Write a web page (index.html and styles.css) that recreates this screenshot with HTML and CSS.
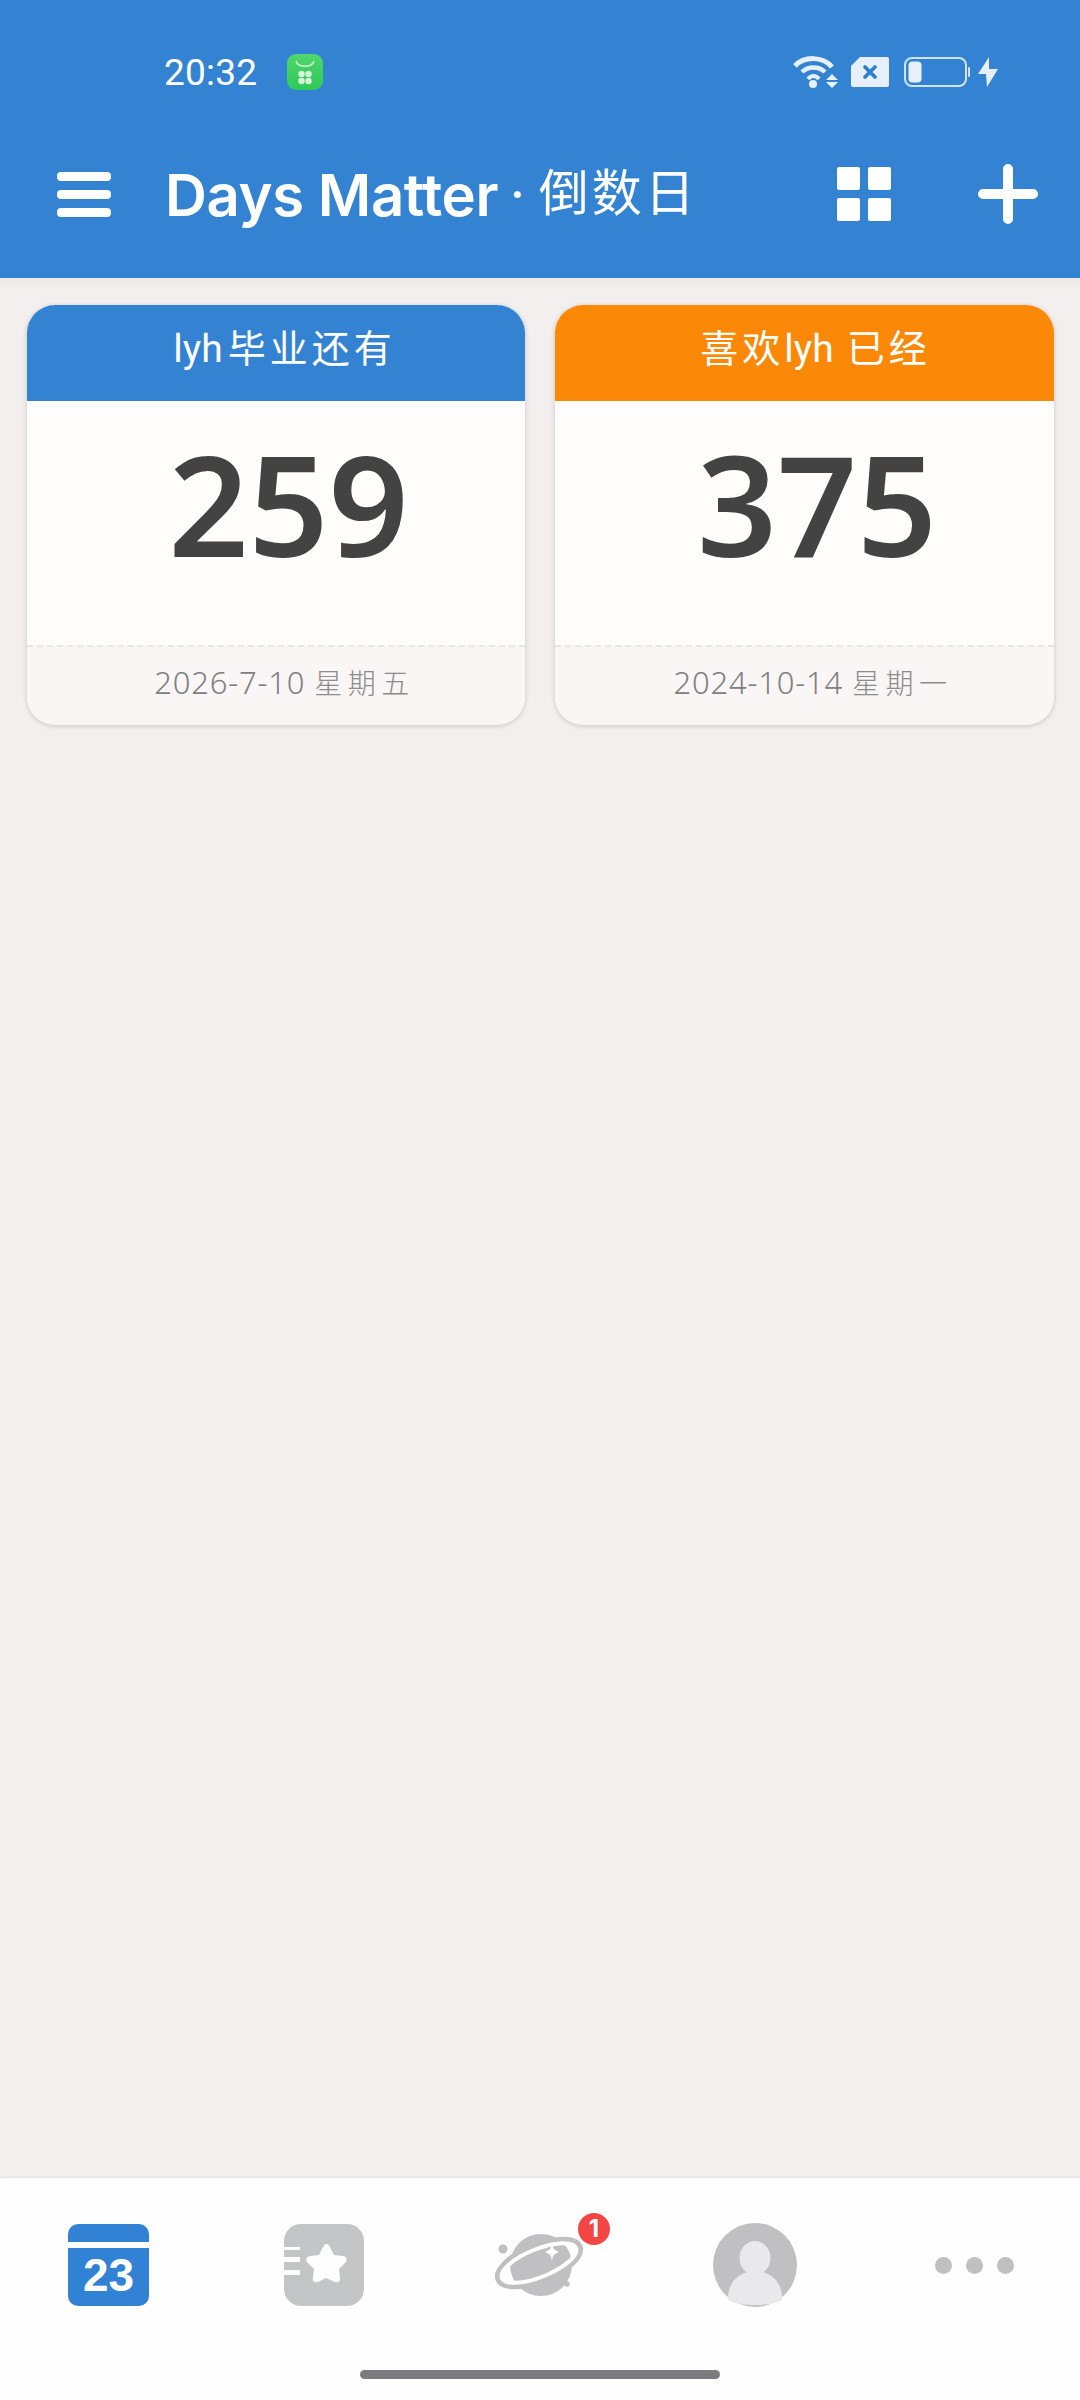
FILE: index.html
```html
<!DOCTYPE html>
<html lang="zh">
<head>
<meta charset="utf-8">
<title>Days Matter</title>
<link rel="stylesheet" href="styles.css">
</head>
<body>
<div class="app">
  <header class="topbar">
    <div class="status">
      <div class="status-left">
        <span class="time">20:32</span>
        <svg class="store" viewBox="0 0 36 36"><defs><linearGradient id="storeFill" x1="0" y1="0" x2="0" y2="1"><stop offset="0" stop-color="#4fd66c"/><stop offset="1" stop-color="#2ec95a"/></linearGradient></defs><rect width="36" height="36" rx="9" fill="url(#storeFill)"/><path d="M9 7c2 7 16 7 18 0" fill="none" stroke="#d8f5dc" stroke-width="1.5"/><g fill="#d8f5dc"><circle cx="14.500" cy="20" r="3.200"/><circle cx="21.500" cy="20" r="3.200"/><circle cx="14.500" cy="27" r="3.200"/><circle cx="21.500" cy="27" r="3.200"/></g></svg>
      </div>
      <div class="status-right">
        <svg class="wifi" viewBox="0 0 46 34"><g fill="none" stroke="#e6f0fa"><path d="M2 11C11 1 30 1 39 12" stroke-width="5"/><path d="M9 17C15 11 26 11 32 17" stroke-width="4.500"/><path d="M15 24C18 20 23 20 26 24" stroke-width="4"/></g><circle cx="20" cy="29" r="4" fill="#e6f0fa"/><path d="M39 19l6 6H33zM33 27h12l-6 6z" fill="#e6f0fa"/></svg>
        <svg class="sim" viewBox="0 0 38 30"><path d="M9 0H36a2 2 0 0 1 2 2V28a2 2 0 0 1-2 2H2a2 2 0 0 1-2-2V9z" fill="#e6f0fa"/><path d="M14 10l10 10M24 10L14 20" stroke="#2f7fd0" stroke-width="3.800" stroke-linecap="round"/></svg>
        <svg class="battery" viewBox="0 0 66 30"><rect x="1" y="1" width="61" height="28" rx="7" fill="none" stroke="#cfe3f6" stroke-width="2"/><rect x="4.500" y="4.500" width="13" height="21" rx="4" fill="#e6f0fa"/><rect x="64" y="10" width="2" height="10" rx="1" fill="#cfe3f6"/></svg>
        <svg class="bolt" viewBox="0 0 20 30"><path d="M11 0L0 17H8L9 30L20 12H11z" fill="#e6f0fa"/></svg>
      </div>
    </div>
    <div class="toolbar">
      <div class="menu"><span class="menu-bar"></span><span class="menu-bar"></span><span class="menu-bar"></span></div>
      <h1 class="title">Days Matter<span class="title-dot">·</span><span class="title-cn">倒数日</span></h1>
      <div class="grid-btn"><span class="cell"></span><span class="cell"></span><span class="cell"></span><span class="cell"></span></div>
      <svg class="plus" viewBox="0 0 60 60"><path d="M30 5V55M5 30H55" stroke="#fff" stroke-width="10" stroke-linecap="round"/></svg>
    </div>
  </header>

  <main class="content">
    <section class="card">
      <div class="card-head blue">lyh<span class="head-cn">毕业还有</span></div>
      <div class="card-num">259</div>
      <div class="card-date">2026-7-10 <span class="cn">星期五</span></div>
    </section>
    <section class="card">
      <div class="card-head orange"><span class="head-cn">喜欢</span>lyh<span class="head-cn head-gap">已经</span></div>
      <div class="card-num">375</div>
      <div class="card-date">2024-10-14 <span class="cn">星期一</span></div>
    </section>
  </main>

  <nav class="tabbar">
    <div class="tabs">
      <div class="tab">
        <svg class="tab-icon" viewBox="0 0 100 100"><path d="M20 9H81a10 10 0 0 1 10 10V27H10V19A10 10 0 0 1 20 9z" fill="#3182d5"/><path d="M10 33H91V81a10 10 0 0 1-10 10H20A10 10 0 0 1 10 81z" fill="#3182d5"/><text class="cal-num" x="50.500" y="76" text-anchor="middle">23</text></svg>
      </div>
      <div class="tab">
        <svg class="tab-icon" viewBox="0 0 100 100"><rect x="10" y="9" width="80" height="82" rx="17" fill="#c3c5c7"/><path d="M9 32H26V35H9zM9 42H26V47H9zM9 55H26V60H9z" fill="#fefefe"/><path d="M52 29c2 0 3 1 4 3l4 8 9 1c4 1 5 4 2 7l-6 6 1 9c1 3-2 5-5 4l-9-4-8 4c-3 1-6-1-5-4l1-9-6-6c-3-3-2-6 2-7l9-1 4-8c1-2 2-3 3-3z" fill="#fefefe"/></svg>
      </div>
      <div class="tab">
        <svg class="tab-icon" viewBox="0 0 100 100"><circle cx="13" cy="34" r="4.500" fill="#c0bfc2"/><circle cx="77" cy="69" r="2.800" fill="#c0bfc2"/><circle cx="51" cy="50" r="31" fill="#c0bfc2"/><g transform="rotate(-22 49 48)"><ellipse cx="49" cy="48" rx="44" ry="18" fill="none" stroke="#c0bfc2" stroke-width="5.500"/><ellipse cx="49" cy="48" rx="40" ry="14" fill="none" stroke="#fefefe" stroke-width="4"/></g><path d="M62 28c1 6 2 7 7 9-5 2-6 3-7 9-1-6-2-7-7-9 5-2 6-3 7-9z" fill="#fefefe"/></svg>
        <span class="badge">1</span>
      </div>
      <div class="tab">
        <svg class="tab-icon avatar" viewBox="0 0 100 100"><circle cx="50" cy="50" r="42" fill="#c0bfc2"/><ellipse cx="50" cy="43" rx="15.500" ry="17" fill="#e9e8ea"/><path d="M23 85C22 67 35 56 50 56s28 11 27 29c-7 4-16 5-27 5s-20-1-27-5z" fill="#e9e8ea"/></svg>
      </div>
      <div class="tab">
        <div class="dots"><span class="dot"></span><span class="dot"></span><span class="dot"></span></div>
      </div>
    </div>
    <div class="home-bar"></div>
  </nav>
</div>
</body>
</html>
```
FILE: styles.css
```css
* { box-sizing: border-box; }
html, body { margin: 0; padding: 0; }
body {
  width: 1080px;
  height: 2400px;
  overflow: hidden;
  background: #f2efee;
  font-family: "Noto Sans", "Noto Sans CJK SC", sans-serif;
}
.app { display: flex; flex-direction: column; height: 2400px; }

.topbar { height: 278px; background: #3483d3; color: #fff; flex: none; }
.status {
  display: flex;
  justify-content: space-between;
  align-items: center;
  height: 72px;
  margin-top: 36px;
  padding: 0 82px 0 164px;
}
.status-left { display: flex; align-items: center; gap: 30px; }
.time { font: 400 37px/1 Roboto, sans-serif; letter-spacing: 0.2px; color: #fff; }
.store { width: 36px; height: 36px; display: block; }
.status-right { display: flex; align-items: center; }
.wifi { width: 46px; height: 34px; margin-right: 12px; }
.sim { width: 38px; height: 30px; margin-right: 15px; }
.battery { width: 66px; height: 30px; margin-right: 8px; }
.bolt { width: 20px; height: 30px; }

.toolbar {
  display: flex;
  align-items: center;
  height: 100px;
  margin-top: 36px;
  padding: 0 42px 0 57px;
}
.menu { display: flex; flex-direction: column; gap: 9px; width: 54px; flex: none; }
.menu-bar { display: block; height: 9px; border-radius: 4px; background: #fff; }
.title {
  margin: 0 0 0 54px;
  flex: 1;
  font: 600 58px/1 Inter, sans-serif;
  letter-spacing: -0.4px;
  color: #fff;
  white-space: nowrap;
}
.title-dot { font-size: 44px; margin: 0 15px 0 12px; vertical-align: 6px; }
.title-cn {
  font: 400 50px/1 "Noto Sans CJK SC", sans-serif;
  letter-spacing: 3px;
  vertical-align: 5px;
}
.grid-btn {
  display: grid;
  grid-template-columns: 23px 23px;
  grid-auto-rows: 23px;
  gap: 8px;
  flex: none;
  margin-right: 87px;
}
.cell { background: #fff; border-radius: 2px; }
.plus { width: 60px; height: 60px; flex: none; }

.content {
  flex: 1;
  display: grid;
  grid-template-columns: 498px 499px;
  gap: 30px;
  align-items: start;
  padding: 27px 26px 0 27px;
  background: linear-gradient(#ebe8e4, #f2efee 12px);
}
.card {
  display: flex;
  flex-direction: column;
  height: 420px;
  border-radius: 28px;
  overflow: hidden;
  background: #fefdfc;
  box-shadow: 0 1px 5px rgba(0, 0, 0, 0.18);
}
.card-head {
  height: 96px;
  padding: 11px 0 0 17px;
  text-align: center;
  font: 400 39px/60px Roboto, "Noto Sans CJK SC", sans-serif;
  color: #fff;
  flex: none;
}
.head-cn {
  font: 400 38px/60px "Noto Sans CJK SC", sans-serif;
  letter-spacing: 4px;
  margin-left: 5px;
}
.head-gap { margin-left: 13px; }
.blue { background: #3483d3; }
.orange { background: #fb8806; }
.card-num {
  flex: 1;
  padding: 26px 0 0 25px;
  text-align: center;
  font: 600 140px/152px "Noto Sans", sans-serif;
  color: #444343;
}
.card-date {
  height: 80px;
  flex: none;
  padding-left: 17px;
  border-top: 2px dashed #eae8e6;
  background: #f9f6f5;
  text-align: center;
  font: 300 31px/70px "Noto Sans", "Noto Sans CJK SC", sans-serif;
  letter-spacing: 0.8px;
  color: #808080;
}
.cn { font-family: "Noto Sans CJK SC", sans-serif; font-size: 28px; letter-spacing: 5.500px; color: #8c8c8c; }

.tabbar {
  flex: none;
  height: 222px;
  background: #fefefe;
  padding-top: 37px;
  box-shadow: 0 -1px 2px rgba(0, 0, 0, 0.08);
}
.tabs { display: grid; grid-template-columns: repeat(5, 216px); height: 100px; }
.tab { position: relative; display: flex; justify-content: center; align-items: center; }
.tab-icon { width: 100px; height: 100px; display: block; }
.avatar { margin-left: -2px; }
.cal-num { font: 700 46px "Liberation Sans", sans-serif; fill: #fff; }
.badge {
  position: absolute;
  left: 146px;
  top: -2px;
  width: 32px;
  height: 32px;
  border-radius: 50%;
  background: #f44545;
  color: #fff;
  text-align: center;
  font: 700 24px/32px Inter, sans-serif;
}
.dots { display: flex; gap: 14px; margin-left: 4px; }
.dot { width: 17px; height: 17px; border-radius: 50%; background: #c0bfc2; }
.home-bar {
  width: 360px;
  height: 9px;
  margin: 55px auto 0;
  border-radius: 5px;
  background: #7d7b80;
}
```
